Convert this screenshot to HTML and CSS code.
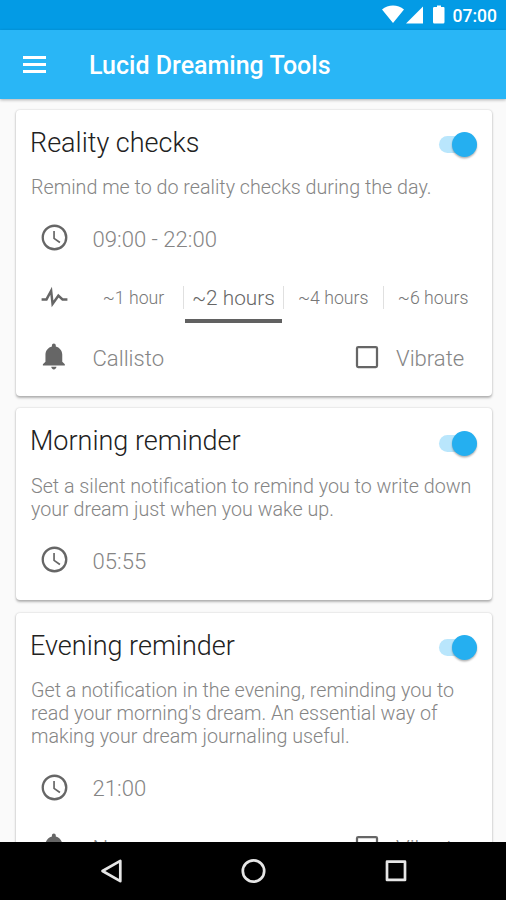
FILE: index.html
```html
<!DOCTYPE html>
<html lang="en">
<head>
<meta charset="utf-8">
<title>Lucid Dreaming Tools</title>
<link rel="stylesheet" href="styles.css">
</head>
<body>
<svg class="defs" aria-hidden="true">
  <symbol id="clock" viewBox="0 0 24 24"><path d="M12 2a10 10 0 1 0 0 20 10 10 0 0 0 0-20zm0 18.200a8.200 8.200 0 1 1 0-16.400 8.200 8.200 0 0 1 0 16.400zM12.300 7H11v6l4.800 3.500.8-1.200-4.300-3z"/></symbol>
  <symbol id="bell" viewBox="0 0 24 24"><path d="M11.500 22c1.100 0 2-.9 2-2h-4c0 1.100.9 2 2 2zm6.500-6v-5.500c0-3.070-2.130-5.640-5-6.320V3.500c0-.83-.67-1.500-1.500-1.500S10 2.670 10 3.500v.68c-2.870.68-5 3.250-5 6.320V16l-2 2v1h17v-1l-2-2z"/></symbol>
  <symbol id="pulse" viewBox="0 0 24 24"><path d="M2 13.500h3.800L9.400 6.800l1.100 10.200 4.500-6.400 3.200 2.900H22" fill="none" stroke="currentColor" stroke-width="1.900"/></symbol>
  <symbol id="box" viewBox="0 0 24 24"><rect x="4" y="4" width="16" height="16" rx="1" fill="none" stroke="currentColor" stroke-width="1.800"/></symbol>
</svg>
<div class="phone">
  <div class="status">
    <svg class="signals" viewBox="0 0 64 20"><path d="M0 4.500C6-.8 16-.8 22 4.500L11 18zM24 18.500 41 1.500v17zM52.500 2H55V.5h4V2h2.500q1 0 1 1v14q0 1.500-1.300 1.500h-8.900Q51 18.500 51 17V3q0-1 1.500-1z"/></svg>
    <span class="time">07:00</span>
  </div>
  <header class="bar">
    <span class="menu"><i></i><i></i><i></i></span>
    <h1>Lucid Dreaming Tools</h1>
  </header>
  <main class="list">
    <section class="card">
      <div class="head"><h2>Reality checks</h2><span class="switch"></span></div>
      <p>Remind me to do reality checks during the day.</p>
      <div class="row"><svg class="icon"><use href="#clock"/></svg><span class="value">09:00 - 22:00</span></div>
      <div class="row"><svg class="icon"><use href="#pulse"/></svg>
        <div class="tabs"><span>~1 hour</span><span class="on">~2 hours</span><span>~4 hours</span><span>~6 hours</span></div>
      </div>
      <div class="row"><svg class="icon"><use href="#bell"/></svg><span class="value">Callisto</span><svg class="check"><use href="#box"/></svg><span class="label">Vibrate</span></div>
    </section>
    <section class="card">
      <div class="head"><h2>Morning reminder</h2><span class="switch"></span></div>
      <p>Set a silent notification to remind you to write down<br>your dream just when you wake up.</p>
      <div class="row"><svg class="icon"><use href="#clock"/></svg><span class="value">05:55</span></div>
    </section>
    <section class="card">
      <div class="head"><h2>Evening reminder</h2><span class="switch"></span></div>
      <p>Get a notification in the evening, reminding you to<br>read your morning's dream. An essential way of<br>making your dream journaling useful.</p>
      <div class="row"><svg class="icon"><use href="#clock"/></svg><span class="value">21:00</span></div>
      <div class="row"><svg class="icon"><use href="#bell"/></svg><span class="value">None</span><svg class="check"><use href="#box"/></svg><span class="label">Vibrate</span></div>
    </section>
  </main>
  <nav class="nav">
    <svg viewBox="0 0 506 58" fill="none" stroke="#e6e6e6" stroke-width="2.700" stroke-linejoin="round"><path d="M102.500 29 120.300 18.800V39.200z"/><circle cx="253.500" cy="29" r="10.700"/><rect x="387" y="19.700" width="18" height="18.200"/></svg>
  </nav>
</div>
</body>
</html>
```
FILE: styles.css
```css
* { box-sizing: border-box; margin: 0; padding: 0; }
body { font-family: Roboto, "Liberation Sans", sans-serif; background: #fafafa; }
.defs { position: absolute; width: 0; height: 0; }
.phone { width: 506px; height: 900px; display: flex; flex-direction: column; overflow: hidden; }
.status { height: 30px; flex: none; background: #039be5; display: flex; align-items: center; justify-content: flex-end; padding-right: 9px; color: #fff; }
.signals { width: 64px; height: 20px; fill: #fff; margin-right: 6.500px; }
.time { font-size: 17.500px; font-weight: 500; line-height: 30px; padding-top: 2px; }
.bar { height: 69px; flex: none; background: #29b6f6; display: flex; align-items: center; padding-left: 23px; color: #fff; box-shadow: 0 1px 3px rgba(0,0,0,.3); z-index: 1; }
.menu { width: 23px; display: flex; flex-direction: column; gap: 4px; margin-right: 43px; }
.menu i { height: 3px; background: #fff; }
h1 { font-size: 25px; font-weight: 500; white-space: nowrap; padding-top: 2px; }
.list { flex: 1; min-height: 0; overflow: hidden; padding: 10.500px 14.500px 0 15.500px; display: flex; flex-direction: column; gap: 12px; background: #fafafa; }
.card { flex: none; background: #fff; border-radius: 4px; padding: 15px 14.500px 9.500px 14.500px; box-shadow: 0 1.500px 2.500px rgba(0,0,0,.28), 0 0 2px rgba(0,0,0,.12); }
.card:nth-child(2) { padding-bottom: 10.500px; margin-bottom: .5px; }
.head { height: 37px; display: flex; align-items: center; justify-content: space-between; }
h2 { font-size: 27px; font-weight: 300; line-height: 33px; color: #212121; white-space: nowrap; }
.switch { width: 38px; height: 17px; border-radius: 9px; background: #b9e6fc; display: flex; align-items: center; justify-content: flex-end; position: relative; top: 1.500px; }
.switch::after { content: ""; width: 25px; height: 25px; flex: none; border-radius: 50%; background: #25aff0; box-shadow: 0 1.500px 2px rgba(0,0,0,.3); }
p { font-size: 19.700px; font-weight: 300; line-height: 23px; color: #858585; white-space: nowrap; margin: 14px 0 9.500px; padding-left: 1px; }
.card:nth-child(n+2) p { margin: 14.500px 0 9.500px; }
.row { height: 59.500px; display: flex; align-items: center; padding-left: 9px; color: #666; }
.icon { width: 31px; height: 31px; flex: none; fill: currentColor; }
.value, .label { font-size: 22.100px; font-weight: 300; line-height: 28px; color: #858585; white-space: nowrap; padding-top: 2px; }
.value { margin-left: 22.500px; }
.check { width: 30px; height: 30px; flex: none; margin-left: auto; }
.label { width: 81px; margin-left: 14px; }
.tabs { display: grid; grid-template-columns: repeat(4, 99.900px); margin-left: 13px; flex: none; height: 59.500px; align-items: center; }
.tabs span { height: 23px; line-height: 25px; text-align: center; font-size: 17.700px; font-weight: 300; color: #777; border-left: 1.500px solid #e0e0e0; white-space: nowrap; position: relative; }
.tabs span:first-child { border-left-color: transparent; }
.tabs .on { font-size: 20.800px; color: #666; }
.tabs .on::after { content: ""; position: absolute; left: 1px; width: 97.500px; top: 33px; height: 4px; background: #616161; }
.nav { height: 58px; flex: none; background: #000; z-index: 1; }
.nav svg { width: 506px; height: 58px; display: block; }
```
